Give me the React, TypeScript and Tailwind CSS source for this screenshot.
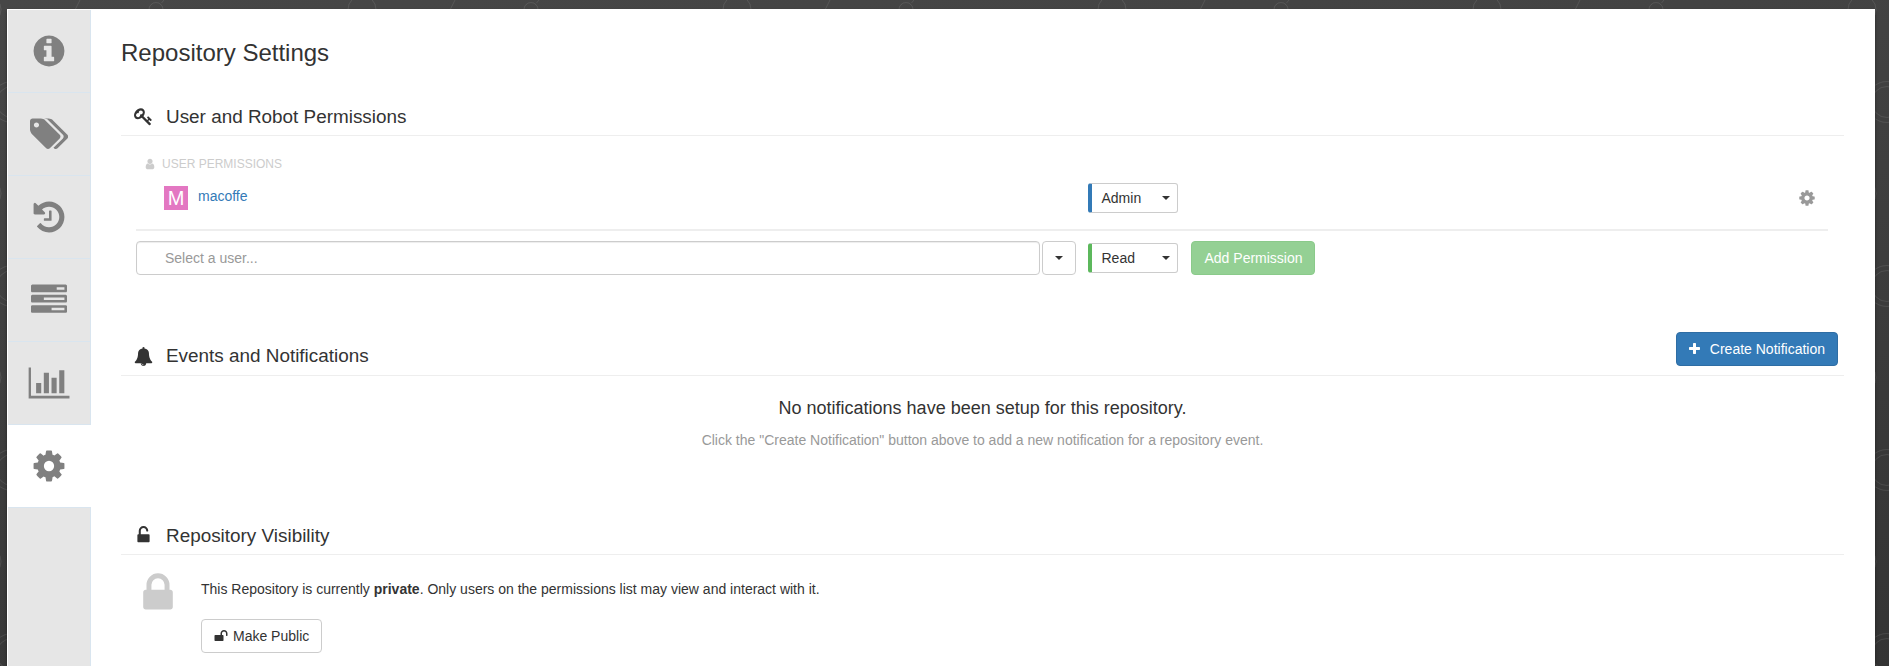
import React from "react";

const P = {
  info: "M1152 1376v-160q0-14-9-23t-23-9h-96v-512q0-14-9-23t-23-9h-320q-14 0-23 9t-9 23v160q0 14 9 23t23 9h96v320h-96q-14 0-23 9t-9 23v160q0 14 9 23t23 9h448q14 0 23-9t9-23zm-128-896v-160q0-14-9-23t-23-9h-192q-14 0-23 9t-9 23v160q0 14 9 23t23 9h192q14 0 23-9t9-23zm640 416q0 209-103 385.5t-279.5 279.5-385.5 103-385.5-103-279.5-279.5-103-385.5 103-385.5 279.5-279.5 385.5-103 385.5 103 279.5 279.5 103 385.5z",
  tags: "M448 448q0-53-37.5-90.5t-90.5-37.5-90.5 37.5-37.5 90.5 37.5 90.5 90.5 37.5 90.5-37.5 37.5-90.5zm1067 576q0 53-37 90l-491 492q-39 37-91 37-53 0-90-37l-715-716q-38-37-64.5-101t-26.5-117v-416q0-52 38-90t90-38h416q53 0 117 26.5t102 64.5l715 714q37 39 37 91zm384 0q0 53-37 90l-491 492q-39 37-91 37-36 0-59-14t-53-45l470-470q37-37 37-90 0-52-37-91l-715-714q-38-38-102-64.5t-117-26.5h224q53 0 117 26.5t102 64.5l715 714q37 39 37 91z",
  history: "M1664 896q0 156-61 298t-164 245-245 164-298 61q-172 0-327-72.5t-264-204.5q-7-10-6.5-22.5t8.5-20.5l137-138q10-9 25-9 16 2 23 12 73 95 179 147t225 52q104 0 198.5-40.5t163.5-109.5 109.5-163.5 40.5-198.5-40.5-198.5-109.5-163.5-163.5-109.5-198.5-40.5q-98 0-188 35.5t-160 101.5l137 138q31 30 14 69-17 40-59 40h-448q-26 0-45-19t-19-45v-448q0-42 40-59 39-17 69 14l130 129q107-101 244.5-156.5t284.5-55.5q156 0 298 61t245 164 164 245 61 298zm-640-288v448q0 14-9 23t-23 9h-320q-14 0-23-9t-9-23v-64q0-14 9-23t23-9h224v-352q0-14 9-23t23-9h64q14 0 23 9t9 23z",
  tasks: "M1024 1408h640v-128h-640v128zm-384-512h1024v-128h-1024v128zm640-512h384v-128h-384v128zm512 832v256q0 26-19 45t-45 19h-1664q-26 0-45-19t-19-45v-256q0-26 19-45t45-19h1664q26 0 45 19t19 45zm0-512v256q0 26-19 45t-45 19h-1664q-26 0-45-19t-19-45v-256q0-26 19-45t45-19h1664q26 0 45 19t19 45zm0-512v256q0 26-19 45t-45 19h-1664q-26 0-45-19t-19-45v-256q0-26 19-45t45-19h1664q26 0 45 19t19 45z",
  chart: "M640 896v512h-256v-512h256zm384-512v1024h-256v-1024h256zm1024 1152v128h-2048v-1536h128v1408h1920zm-640-896v768h-256v-768h256zm384-384v1152h-256v-1152h256z",
  cog: "M1152 896q0-106-75-181t-181-75-181 75-75 181 75 181 181 75 181-75 75-181zm512-109v222q0 12-8 23t-20 13l-185 28q-19 54-39 91 35 50 107 138 10 12 10 25t-9 23q-27 37-99 108t-94 71q-12 0-26-9l-138-108q-44 23-91 38-16 136-29 186-7 28-36 28h-222q-14 0-24.5-8.5t-11.5-21.5l-28-184q-49-16-90-37l-141 107q-10 9-25 9-14 0-25-11-126-114-165-168-7-10-7-23 0-12 8-23 15-21 51-66.5t54-70.5q-27-50-41-99l-183-27q-13-2-21-12.5t-8-23.5v-222q0-12 8-23t19-13l186-28q14-46 39-92-40-57-107-138-10-12-10-24 0-10 9-23 26-36 98.5-107.5t94.5-71.5q13 0 26 10l138 107q44-23 91-38 16-136 29-186 7-28 36-28h222q14 0 24.5 8.5t11.5 21.5l28 184q49 16 90 37l142-107q9-9 24-9 13 0 25 10 129 119 165 170 7 8 7 22 0 12-8 23-15 21-51 66.5t-54 70.5q26 50 41 98l183 28q13 2 21 12.5t8 23.5z",
  key: "M832 512q0-80-56-136t-136-56-136 56-56 136q0 42 19 83-41-19-83-19-80 0-136 56t-56 136 56 136 136 56 136-56 56-136q0-42-19-83 41 19 83 19 80 0 136-56t56-136zm851 704q0 17-49 66t-66 49q-9 0-28.5-16t-36.5-33-38.5-40-24.5-26l-96 96 220 220q28 28 28 68 0 42-39 81t-81 39q-40 0-68-28l-671-671q-176 131-365 131-163 0-265.5-102.5t-102.5-265.5q0-160 95-313t248-248 313-95q163 0 265.5 102.5t102.5 265.5q0 189-131 365l355 355 96-96q-3-3-26-24.5t-40-38.5-33-36.5-16-28.5q0-17 49-66t66-49q13 0 23 10 6 6 46 44.5t82 79.5 86.5 86 73 78 28.5 41z",
  user: "M1536 1399q0 109-62.5 187t-150.5 78h-854q-88 0-150.5-78t-62.5-187q0-85 8.5-160.5t31.5-152 58.5-131 94-89 134.5-34.5q131 128 313 128t313-128q76 0 134.5 34.5t94 89 58.5 131 31.5 152 8.5 160.5zm-256-887q0 159-112.5 271.5t-271.5 112.5-271.5-112.5-112.5-271.5 112.5-271.5 271.5-112.5 271.5 112.5 112.5 271.5z",
  bell: "M912 1696q0-16-16-16-59 0-101.5-42.5t-42.5-101.5q0-16-16-16t-16 16q0 73 51.5 124.5t124.5 51.5q16 0 16-16zm816-288q0 52-38 90t-90 38h-448q0 106-75 181t-181 75-181-75-75-181h-448q-52 0-90-38t-38-90q50-42 91-88t85-119.5 74.5-158.5 50-206 19.5-260q0-152 117-282.5t307-158.5q-8-19-8-39 0-40 28-68t68-28 68 28 28 68q0 20-8 39 190 28 307 158.5t117 282.5q0 139 19.5 260t50 206 74.5 158.5 85 119.5 91 88z",
  unlockAlt: "M1376 768q40 0 68 28t28 68v576q0 40-28 68t-68 28h-960q-40 0-68-28t-28-68v-576q0-40 28-68t68-28h32v-320q0-185 131.5-316.5t316.5-131.5 316.5 131.5 131.5 316.5q0 26-19 45t-45 19h-64q-26 0-45-19t-19-45q0-106-75-181t-181-75-181 75-75 181v320h736z",
  lock: "M640 768h512v-192q0-106-75-181t-181-75-181 75-75 181v192zm832 96v576q0 40-28 68t-68 28h-960q-40 0-68-28t-28-68v-576q0-40 28-68t68-28h32v-192q0-184 132-316t316-132 316 132 132 316v192h32q40 0 68 28t28 68z",
  unlock: "M1728 576v256q0 26-19 45t-45 19h-64q-26 0-45-19t-19-45v-256q0-106-75-181t-181-75-181 75-75 181v192h96q40 0 68 28t28 68v576q0 40-28 68t-68 28h-960q-40 0-68-28t-28-68v-576q0-40 28-68t68-28h672v-192q0-185 131.5-316.5t316.5-131.5 316.5 131.5 131.5 316.5z",
  plus: "M1600 736v192q0 40-28 68t-68 28h-416v416q0 40-28 68t-68 28h-192q-40 0-68-28t-28-68v-416h-416q-40 0-68-28t-28-68v-192q0-40 28-68t68-28h416v-416q0-40 28-68t68-28h192q40 0 68 28t28 68v416h416q40 0 68 28t28 68z",
};

function Icon({ d, x = 0, w = 1792, className }: { d: string; x?: number; w?: number; className: string }) {
  return (
    <svg viewBox={`${x} 0 ${w} 1792`} className={`shrink-0 fill-current ${className}`} aria-hidden="true">
      <path d={d} />
    </svg>
  );
}

function Caret() {
  return (
    <svg viewBox="0 0 8 4" className="h-1 w-2 shrink-0 fill-[#333]" aria-hidden="true">
      <path d="M0 0h8L4 4z" />
    </svg>
  );
}

/* Faint repeating line art behind the page. */
function Backdrop() {
  return (
    <svg className="pointer-events-none absolute inset-0 h-full w-full" aria-hidden="true">
      <defs>
        <pattern id="doodles" width="375" height="184" patternUnits="userSpaceOnUse">
          <g fill="none" stroke="#fff" strokeOpacity="0.09" strokeWidth="1">
            <path d="M80 0L75 10M161.5 3L164 0" />
            <circle cx="156" cy="9.5" r="7" />
            <circle cx="362" cy="9.5" r="14" />
            <circle cx="-13" cy="9.5" r="14" />
            <circle cx="-13" cy="193.5" r="14" />
            <circle cx="12" cy="102" r="20.5" />
            <circle cx="12" cy="102" r="15.5" />
            <circle cx="387" cy="102" r="20.5" />
            <circle cx="387" cy="102" r="15.5" />
          </g>
        </pattern>
      </defs>
      <rect width="100%" height="100%" fill="url(#doodles)" />
    </svg>
  );
}

const tabs = [
  { d: P.info, w: 1792, cls: "h-9 w-9" },
  { d: P.tags, w: 1920, cls: "h-9 w-[38.6px]" },
  { d: P.history, w: 1792, cls: "h-9 w-9" },
  { d: P.tasks, w: 1792, cls: "h-9 w-9" },
  { d: P.chart, w: 2048, cls: "h-9 w-[41.1px] translate-x-[0.4px]" },
];

function Tabs() {
  return (
    <nav className="mt-px flex w-[83px] shrink-0 flex-col text-[#808080]">
      {tabs.map((t, i) => (
        <div key={i} className="flex h-[83px] shrink-0 items-center justify-center border-b border-r border-[#d9e5ef] bg-[#e6e6e6]">
          <Icon d={t.d} w={t.w} className={t.cls} />
        </div>
      ))}
      <div className="flex h-[82px] shrink-0 items-center justify-center border-r border-white bg-white">
        <Icon d={P.cog} className="h-9 w-9" />
      </div>
      <div className="flex-1 border-r border-t border-[#d9e5ef] bg-[#e6e6e6]" />
    </nav>
  );
}

function Heading({ icon, title, titleClass = "mb-[6px]", children }: { icon: string; title: string; titleClass?: string; children?: React.ReactNode }) {
  return (
    <div className="flex h-[47px] items-end border-b border-[#eee] pl-[12.5px] pr-[6px]">
      <Icon d={icon} className="mb-[9.5px] h-[19px] w-[19px]" />
      <h3 className={`ml-[13.5px] flex-1 text-[18.9px] leading-6 ${titleClass}`}>{title}</h3>
      {children}
    </div>
  );
}

function RoleSelect({ role, className }: { role: string; className: string }) {
  return (
    <button className={`flex h-[30px] w-[90px] shrink-0 items-center justify-between rounded-[3px] border border-l-4 border-[#ccc] pl-[9.5px] pr-[7px] ${className}`}>
      <span>{role}</span>
      <Caret />
    </button>
  );
}

export default function App() {
  return (
    <div className="relative h-[666px] w-full overflow-hidden bg-[linear-gradient(174deg,#474747,#343434)] font-['Liberation_Sans',Arial,sans-serif] text-[14px] leading-5 text-[#333]">
      <Backdrop />
      <div className="relative flex h-full pl-[7px] pr-[14px] pt-[9px]">
        <main className="flex flex-1 bg-white pl-px shadow-[0_2px_3px_rgba(0,0,0,0.4)]">
          <Tabs />
          <div className="flex flex-1 flex-col pl-[30px] pr-[31px]">
            <h2 className="mb-[21px] mt-[29px] text-[24px] leading-[30px]">Repository Settings</h2>

            <Heading icon={P.key} title="User and Robot Permissions" />
            <section className="flex h-[193px] flex-col pl-[15px] pr-4">
              <div className="mt-[18px] flex h-5 items-center gap-[6px] pl-[8px] text-[12px] text-[#ccc]">
                <Icon d={P.user} className="h-3 w-3" />
                <span>USER PERMISSIONS</span>
              </div>
              <div className="flex h-[55px] pl-7 pt-[9px]">
                <span className="mt-[3px] flex h-6 w-6 items-center justify-center bg-[#e377c2] text-[20px] text-white">M</span>
                <a className="ml-[10px] mt-[3px] w-[890px] text-[#337ab7]">macoffe</a>
                <RoleSelect role="Admin" className="border-l-[#337ab7]" />
                <span className="flex-1" />
                <Icon d={P.cog} className="mr-[12px] mt-[6px] h-[18px] w-[18px] text-[#999]" />
              </div>
              <div className="h-[2px] bg-[#eee]" />
              <div className="mt-[10px] flex items-center">
                <div className="flex h-[34px] w-[904px] items-center rounded border border-[#ccc] pl-[28px] text-[#999] shadow-[inset_0_1px_1px_rgba(0,0,0,0.075)]">Select a user...</div>
                <button className="ml-[2px] flex h-[34px] w-[34px] items-center justify-center rounded border border-[#ccc]"><Caret /></button>
                <RoleSelect role="Read" className="ml-[12px] border-l-[#5cb85c]" />
                <button className="ml-[13px] h-[34px] w-[124px] whitespace-nowrap rounded border border-[#4cae4c] bg-[#5cb85c] pl-[12.5px] text-left text-white opacity-65">Add Permission</button>
              </div>
            </section>

            <Heading icon={P.bell} title="Events and Notifications" titleClass="mb-[7px]">
              <button className="mb-[9px] flex h-[34px] items-center rounded border border-[#2e6da4] bg-[#337ab7] px-3 text-white">
                <Icon d={P.plus} x={192} w={1408} className="mr-[10px] h-[14px] w-[11px]" />
                Create Notification
              </button>
            </Heading>
            <section className="h-[132px] text-center">
              <div className="mt-[20px] text-[18px] leading-[25px]">No notifications have been setup for this repository.</div>
              <div className="mt-[9px] text-[#999]">Click the "Create Notification" button above to add a new notification for a repository event.</div>
            </section>

            <Heading icon={P.unlockAlt} title="Repository Visibility" />
            <section className="flex items-start pl-[14px] pt-[15px]">
              <Icon d={P.lock} className="h-[46px] w-[46px] text-[#ccc]" />
              <div className="ml-[20px]">
                <p className="mt-[9px]">This Repository is currently <b>private</b>. Only users on the permissions list may view and interact with it.</p>
                <button className="mt-[20px] flex h-[34px] items-center rounded border border-[#ccc] px-3">
                  <Icon d={P.unlock} className="mr-[5px] h-[14px] w-[14px]" />
                  Make Public
                </button>
              </div>
            </section>
          </div>
        </main>
      </div>
    </div>
  );
}
